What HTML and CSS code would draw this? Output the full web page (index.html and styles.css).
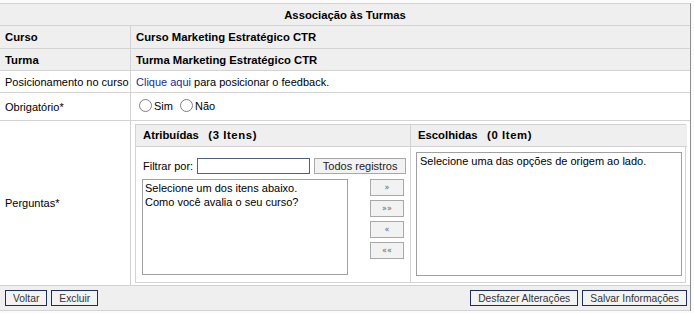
FILE: index.html
```html
<!DOCTYPE html>
<html lang="pt-BR">
<head>
    <meta charset="UTF-8">
    <title>Associação às Turmas</title>
    <link rel="stylesheet" href="styles.css">
</head>
<body>
<table class="form">
    <colgroup>
        <col class="col-label">
        <col>
    </colgroup>
    <tr>
        <td colspan="2" class="title">Associação às Turmas</td>
    </tr>
    <tr class="shaded row-curso">
        <td class="label bold">Curso</td>
        <td class="bold">Curso Marketing Estratégico CTR</td>
    </tr>
    <tr class="shaded">
        <td class="label bold">Turma</td>
        <td class="bold">Turma Marketing Estratégico CTR</td>
    </tr>
    <tr>
        <td class="label">Posicionamento no curso</td>
        <td><a href="#" class="link">Clique aqui</a> para posicionar o feedback.</td>
    </tr>
    <tr class="row-obrig">
        <td class="label">Obrigatório*</td>
        <td>
            <label class="radio"><input type="radio" name="obrig"> Sim</label>
            <label class="radio"><input type="radio" name="obrig"> Não</label>
        </td>
    </tr>
    <tr class="row-perg">
        <td class="label">Perguntas*</td>
        <td class="perg-cell">
            <div class="pick">
                <div class="panel panel-left">
                    <div class="panel-head">Atribuídas&nbsp;&nbsp;&nbsp;<span class="count">(3 Itens)</span></div>
                    <div class="panel-body">
                        <div class="filter">
                            <span>Filtrar por:</span>
                            <input type="text" class="filter-input">
                            <button class="btn-light">Todos registros</button>
                        </div>
                        <div class="lists">
                            <div class="listbox list-left">
                                <div>Selecione um dos itens abaixo.</div>
                                <div>Como você avalia o seu curso?</div>
                            </div>
                            <div class="moves">
                                <button class="move">&raquo;</button>
                                <button class="move">&raquo;&raquo;</button>
                                <button class="move">&laquo;</button>
                                <button class="move">&laquo;&laquo;</button>
                            </div>
                        </div>
                    </div>
                </div>
                <div class="panel">
                    <div class="panel-head">Escolhidas&nbsp;&nbsp;&nbsp;<span class="count">(0 Item)</span></div>
                    <div class="panel-body right-body">
                        <div class="listbox list-right">
                            <div>Selecione uma das opções de origem ao lado.</div>
                        </div>
                    </div>
                </div>
            </div>
        </td>
    </tr>
    <tr class="shaded">
        <td colspan="2" class="footer-cell">
            <div class="footer">
                <div class="actions">
                    <button class="btn">Voltar</button>
                    <button class="btn">Excluir</button>
                </div>
                <div class="actions">
                    <button class="btn">Desfazer Alterações</button>
                    <button class="btn">Salvar Informações</button>
                </div>
            </div>
        </td>
    </tr>
</table>
</body>
</html>
```

FILE: styles.css
```css
body {
    margin: 0;
    padding: 3px 0 0 0;
    background-color: #fbfbfb;
    font-family: "Liberation Sans", Arial, sans-serif;
    font-size: 11px;
    color: #000;
}
.form {
    width: 691px;
    table-layout: fixed;
    border-collapse: separate;
    border-spacing: 0;
    border-top: 1px solid #d3d3d3;
    border-right: 1px solid #8c8c8c;
    background-color: #fff;
}
.col-label {
    width: 131px;
}
.form td {
    box-sizing: border-box;
    height: 22px;
    padding: 0 5px;
    border-bottom: 1px solid #d3d3d3;
    vertical-align: middle;
    white-space: nowrap;
}
.form td.label {
    border-right: 1px solid #d3d3d3;
    padding-left: 5px;
}
.title {
    background-color: #efefef;
    text-align: center;
    font-weight: bold;
    font-size: 11.3px;
}
.shaded td {
    background-color: #efefef;
}
.row-curso td {
    height: 23px;
}
.row-obrig td {
    height: 28px;
}
.row-perg td {
    height: 165px;
}
.form td.bold {
    font-weight: bold;
    font-size: 11.3px;
}
.link {
    color: #1f2a8c;
    text-decoration: none;
}
.radio {
    display: inline-flex;
    align-items: center;
    margin-right: 1px;
}
.radio input {
    appearance: none;
    width: 13px;
    height: 13px;
    margin: 0 2px 0 3px;
    border: 1px solid #808080;
    border-radius: 50%;
    background-color: #fff;
}
.form td.perg-cell {
    padding: 3px 4px 2px 4px;
    vertical-align: top;
}
.pick {
    display: grid;
    grid-template-columns: 275px 1fr;
    height: 159px;
    border: 1px solid #d3d3d3;
    box-sizing: border-box;
}
.panel-left {
    border-right: 1px solid #d3d3d3;
}
.panel-head {
    height: 21px;
    line-height: 21px;
    padding-left: 7px;
    background-color: #efefef;
    border-bottom: 1px solid #d3d3d3;
    font-weight: bold;
    font-size: 11.3px;
}
.count {
    letter-spacing: 0.6px;
}
.panel-body {
    padding: 11px 0 0 6px;
}
.right-body {
    padding: 5px 5px 0 5px;
}
.filter {
    display: flex;
    align-items: center;
    height: 16px;
}
.filter span {
    margin-left: 1px;
    margin-right: 4px;
}
.filter-input {
    box-sizing: border-box;
    width: 113px;
    height: 16px;
    margin: 0;
    border: 1px solid #56607a;
    background-color: #fff;
}
.btn-light {
    box-sizing: border-box;
    width: 92px;
    height: 16px;
    margin-left: 4px;
    padding: 0;
    border: 1px solid #a8a8a8;
    background-color: #f2f2f2;
    font-family: "Liberation Sans", Arial, sans-serif;
    font-size: 11px;
    color: #222;
}
.lists {
    display: flex;
    margin-top: 5px;
}
.listbox {
    box-sizing: border-box;
    border: 1px solid #a0a0a0;
    background-color: #fff;
    padding: 1px 2px;
    line-height: 14px;
}
.list-left {
    width: 206px;
    height: 96px;
}
.list-right {
    width: 266px;
    height: 124px;
    padding-left: 3px;
}
.moves {
    display: flex;
    flex-direction: column;
    gap: 4px;
    margin-left: 22px;
}
.move {
    box-sizing: border-box;
    width: 34px;
    height: 17px;
    padding: 0;
    border: 1px solid #a8a8a8;
    background-color: #f2f2f2;
    font-family: "DejaVu Sans", sans-serif;
    font-size: 8px;
    color: #666;
}
.form td.footer-cell {
    height: 25px;
    padding: 0 3px 0 5px;
}
.footer {
    display: flex;
    justify-content: space-between;
    align-items: center;
}
.actions {
    display: flex;
    gap: 4px;
}
.btn {
    box-sizing: border-box;
    height: 16px;
    padding: 0 7px;
    border: 1px solid #1f2d59;
    background-color: #f3f3f3;
    font-family: "Liberation Sans", Arial, sans-serif;
    font-size: 10.3px;
    color: #333;
}
```
